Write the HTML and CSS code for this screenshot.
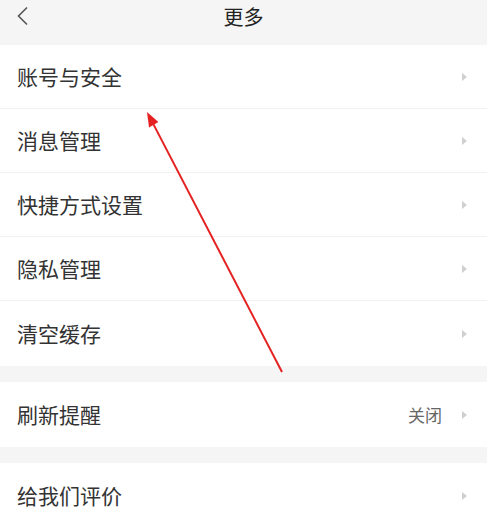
FILE: index.html
```html
<!DOCTYPE html>
<html lang="zh-CN">
<head>
<meta charset="utf-8">
<title>更多</title>
<link rel="stylesheet" href="styles.css">
</head>
<body>
<div class="page">
  <header class="topbar">
    <span class="back">
      <svg width="14" height="20" viewBox="0 0 14 20"><polyline points="11,1.5 2.5,10 11,18.5" fill="none" stroke="#555" stroke-width="1.6"/></svg>
    </span>
    <h1 class="title">更多</h1>
  </header>

  <section class="group">
    <div class="row"><span class="label">账号与安全</span><span class="arrow"></span></div>
    <div class="row"><span class="label">消息管理</span><span class="arrow"></span></div>
    <div class="row"><span class="label">快捷方式设置</span><span class="arrow"></span></div>
    <div class="row"><span class="label">隐私管理</span><span class="arrow"></span></div>
    <div class="row"><span class="label">清空缓存</span><span class="arrow"></span></div>
  </section>

  <section class="group">
    <div class="row"><span class="label">刷新提醒</span><span class="value">关闭</span><span class="arrow"></span></div>
  </section>

  <section class="group group-last">
    <div class="row"><span class="label">给我们评价</span><span class="arrow"></span></div>
  </section>

  <svg class="annot" width="487" height="523" viewBox="0 0 487 523">
    <line x1="282" y1="372" x2="153.5" y2="124.4" stroke="#e52222" stroke-width="2"/>
    <polygon points="147,112 158.4,122 149,127.5" fill="#e52222"/>
  </svg>
</div>
</body>
</html>
```

FILE: styles.css
```css
* { box-sizing: border-box; }
html, body {
  margin: 0;
  padding: 0;
  background: #f5f5f5;
}
body {
  font-family: "Noto Sans CJK SC", "Noto Sans", sans-serif;
  color: #333;
}
.page {
  position: relative;
  width: 487px;
  height: 523px;
  overflow: hidden;
  background: #f5f5f5;
}
.topbar {
  position: relative;
  height: 45px;
  display: flex;
  align-items: flex-start;
  justify-content: center;
  background: #f5f5f5;
}
.back {
  position: absolute;
  left: 16px;
  top: 6px;
  display: flex;
}
.title {
  margin: 0;
  padding-top: 3px;
  font-size: 20px;
  font-weight: 400;
  line-height: 28px;
  color: #222;
}
.group {
  background: #fff;
  margin-bottom: 16px;
}
.group-last { margin-bottom: 0; }
.row {
  height: 64px;
  display: flex;
  align-items: center;
  padding: 0 20px 0 17px;
  border-bottom: 1px solid #f1f1f1;
}
.row:last-child { border-bottom: none; height: 65px; }
.label {
  flex: 1;
  font-size: 21px;
  line-height: 1;
  color: #333;
}
.value {
  font-size: 17px;
  color: #666;
  margin-right: 20px;
}
.arrow {
  width: 0;
  height: 0;
  border-top: 4.5px solid transparent;
  border-bottom: 4.5px solid transparent;
  border-left: 5px solid #cfcfcf;
}
.annot {
  position: absolute;
  left: 0;
  top: 0;
  pointer-events: none;
}
```
